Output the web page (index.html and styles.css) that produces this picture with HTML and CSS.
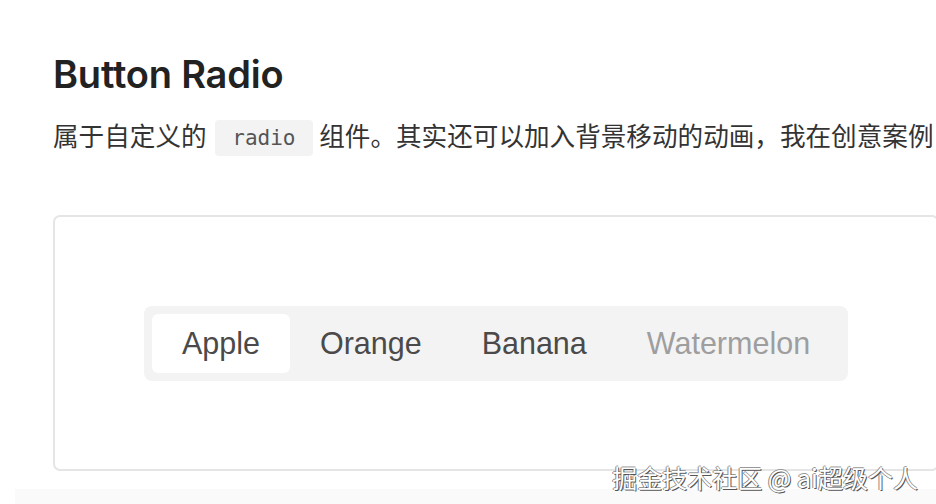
FILE: index.html
```html
<!DOCTYPE html>
<html lang="zh-CN">
<head>
<meta charset="utf-8">
<title>Button Radio</title>
<link rel="stylesheet" href="styles.css">
</head>
<body>
<main class="page">
  <h2 class="title">Button Radio</h2>
  <p class="desc">属于自定义的 <code class="code">radio</code> 组件。其实还可以加入背景移动的动画，我在创意案例</p>
  <section class="demo">
    <div class="segmented" role="radiogroup">
      <label class="seg-item is-active">Apple</label>
      <label class="seg-item">Orange</label>
      <label class="seg-item">Banana</label>
      <label class="seg-item is-disabled">Watermelon</label>
    </div>
  </section>
  <div class="next-strip"></div>
</main>
<div class="watermark">掘金技术社区 @ ai超级个人</div>
</body>
</html>
```

FILE: styles.css
```css
html, body {
  margin: 0;
  padding: 0;
  background: #ffffff;
  overflow: hidden;
  width: 936px;
  height: 504px;
}
.page {
  padding: 50px 0 0 53px;
  font-family: "Noto Sans CJK SC", "Noto Sans", sans-serif;
  color: #333;
}
.title {
  margin: 0;
  font-family: Inter, "Liberation Sans", sans-serif;
  font-weight: 600;
  font-size: 38px;
  line-height: 48px;
  color: #222;
  letter-spacing: -0.2px;
}
.desc {
  margin: 17px 0 0;
  font-size: 25.6px;
  line-height: 40px;
  white-space: nowrap;
  color: #333;
}
.code {
  display: inline-block;
  font-family: "DejaVu Sans Mono", "Liberation Mono", monospace;
  font-size: 21px;
  line-height: 36px;
  padding: 0 17px;
  background: #f3f3f4;
  color: #555;
  border-radius: 4px;
  margin: 0 1px 0 3px;
  vertical-align: 1px;
}
.demo {
  margin-top: 59px;
  width: 882px;
  height: 252px;
  border: 2px solid #e5e5e5;
  border-radius: 7px;
  display: flex;
  align-items: center;
  justify-content: center;
}
.segmented {
  display: flex;
  padding: 8px;
  background: #f3f3f4;
  border-radius: 8px;
}
.seg-item {
  display: block;
  padding: 0 30px;
  height: 59px;
  line-height: 59px;
  font-family: "Liberation Sans", Arial, sans-serif;
  font-size: 30.5px;
  color: #4a4a4a;
  border-radius: 6px;
}
.seg-item.is-active {
  background: #ffffff;
}
.seg-item.is-disabled {
  color: #9e9e9e;
}
.next-strip {
  margin: 18px 0 0 -38px;
  height: 20px;
  background: #fafafa;
}
.watermark {
  position: absolute;
  right: 18px;
  top: 461px;
  font-family: "Noto Sans CJK SC", sans-serif;
  font-size: 25px;
  line-height: 32px;
  color: #ffffff;
  text-shadow: 1px 1px 0 #555, -1px 0 0 #888, 0 -1px 0 #999;
}
```
